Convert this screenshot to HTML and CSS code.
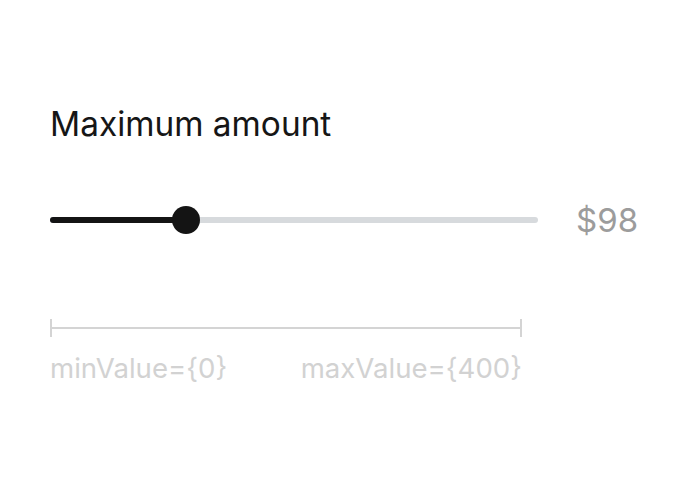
FILE: index.html
```html
<!DOCTYPE html>
<html lang="en">
  <head>
    <meta charset="utf-8" />
    <title>Maximum amount slider</title>
    <link rel="stylesheet" href="styles.css">
  </head>
  <body>
    <main class="panel">
      <h1 class="label">Maximum amount</h1>
      <div class="slider-row">
        <div class="track">
          <div class="fill" style="width: 136px"></div>
          <div class="thumb" style="left: 122px"></div>
        </div>
        <span class="value">$98</span>
      </div>
      <div class="range">
        <div class="ruler"></div>
        <div class="range-labels">
          <span>minValue={0}</span>
          <span>maxValue={400}</span>
        </div>
      </div>
    </main>
  </body>
</html>
```

FILE: styles.css
```css
* {
  box-sizing: border-box;
}
body {
  margin: 0;
  background: #fff;
  font-family: Inter, "Noto Sans", sans-serif;
}
.panel {
  padding: 104px 0 0 50px;
}
.label {
  margin: 0;
  font-size: 33.4px;
  font-weight: 400;
  line-height: 40px;
  color: #161616;
}
.slider-row {
  display: flex;
  align-items: center;
  gap: 38px;
  margin-top: 56px;
  height: 40px;
}
.track {
  position: relative;
  width: 488px;
  height: 6px;
  border-radius: 3px;
  background: #d7dadd;
}
.fill {
  height: 6px;
  border-radius: 3px;
  background: #141414;
}
.thumb {
  position: absolute;
  top: -11px;
  width: 28px;
  height: 28px;
  border-radius: 50%;
  background: #141414;
}
.value {
  font-size: 33px;
  color: #9c9c9c;
}

/* min / max annotation */
.range {
  width: 472px;
  margin-top: 79px;
}
.ruler {
  height: 18px;
  border-left: 2px solid #d4d4d4;
  border-right: 2px solid #d4d4d4;
  background: linear-gradient(#d4d4d4, #d4d4d4) center / 100% 2px no-repeat;
}
.range-labels {
  display: flex;
  justify-content: space-between;
  font-size: 27.6px;
  color: #d2d2d2;
  line-height: 36px;
  margin-top: 13px;
}
```
